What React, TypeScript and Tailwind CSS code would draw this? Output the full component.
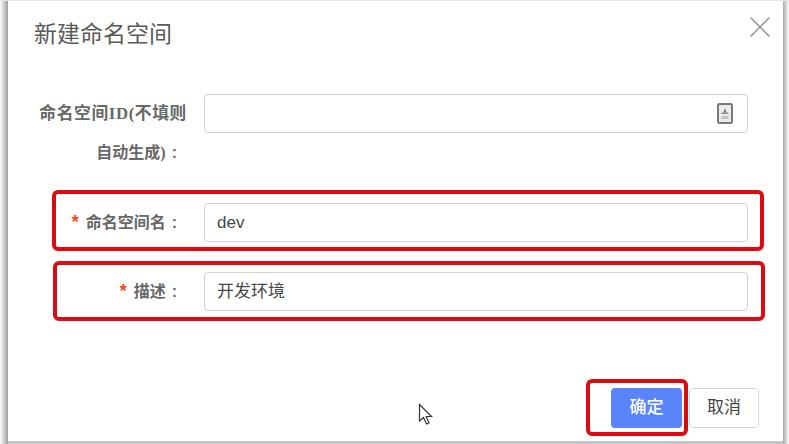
import { X } from 'lucide-react'

const cjk = '"Liberation Sans", "Noto Sans CJK SC", sans-serif'
const serifCjk = '"Liberation Serif", "Noto Sans CJK SC", serif'

function Colon() {
  return <span className="ml-[6px]">:</span>
}

function Label({ children }: { children: React.ReactNode }) {
  return (
    <label className="w-[169px] shrink-0 whitespace-nowrap pr-[10px] text-right text-[16px] leading-[39px] font-bold text-[#686868]">
      <span className="mr-[7px] text-[18px] text-[#f5471c]">*</span>
      {children}
      <Colon />
    </label>
  )
}

function Field({ value }: { value: string }) {
  return (
    <div className="flex h-[39px] w-[544px] items-center rounded border border-[#cccfd4] bg-white pl-3 text-[17px] text-[#484848]">
      {value}
    </div>
  )
}

// red marker boxes drawn over the screenshot
function Marker({ className }: { className: string }) {
  return <div className={`pointer-events-none absolute rounded-[6px] border-[4px] border-[#dd0a12] ${className}`} />
}

export default function App() {
  return (
    <div className="relative h-[444px] w-[789px] overflow-hidden bg-[#c4c4c4]" style={{ fontFamily: cjk }}>
      <div className="absolute left-0 top-0 h-full w-[8px] bg-gradient-to-r from-white to-[#a0a0a0]" />
      <div className="absolute right-0 top-0 h-full w-[6px] bg-gradient-to-r from-[#a8a8a8] to-white" />
      <div className="absolute left-0 top-0 h-[1px] w-full bg-[#e4e4e4]" />
      <div className="relative ml-[8px] mt-[1px] h-[440px] w-[775px] bg-white">
        <div className="flex items-start justify-between pl-[26px] pr-[5px] pt-[18px]">
          <h2 className="text-[23px] leading-[30px] font-normal text-[#5a5a5a]">新建命名空间</h2>
          <X className="-mt-[10px] text-[#8c8c8c]" size={36} strokeWidth={0.9} />
        </div>

        <form className="mt-[45px] flex flex-col pl-[10px]">
          <div className="flex items-start gap-[17px]">
            <label className="w-[169px] shrink-0 whitespace-nowrap text-right text-[16px] leading-[39px] font-bold text-[#686868]">
              <span className="text-[16.8px] tracking-[0.6px]">
                命名空间
                <span style={{ fontFamily: serifCjk }}>ID(</span>
                不填则
              </span>
              <br />
              <span className="pr-[10px]">
                自动生成
                <span style={{ fontFamily: serifCjk }}>)</span>
                <Colon />
              </span>
            </label>
            <div className="flex h-[39px] w-[544px] items-center justify-end rounded border border-[#cccfd4] bg-white pr-[14px]">
              <svg width="16" height="21" viewBox="0 0 16 21" fill="none">
                <rect x="1" y="1" width="14" height="19" rx="1.5" fill="#ececec" stroke="#7a7a7a" strokeWidth="2" />
                <path d="M8 5 L9.5 9.5 H6.5 Z" fill="#777" />
                <rect x="4.5" y="9.5" width="7" height="1.5" fill="#888" />
                <rect x="4.5" y="13" width="7" height="3" fill="#c4c4c4" />
              </svg>
            </div>
          </div>

          <div className="mt-[31px] flex items-center gap-[17px]">
            <Label>命名空间名</Label>
            <Field value="dev" />
          </div>

          <div className="mt-[30px] flex items-center gap-[17px]">
            <Label>描述</Label>
            <Field value="开发环境" />
          </div>
        </form>

        <div className="absolute bottom-[13px] right-[24px] flex gap-[7px]">
          <button className="h-[40px] w-[71px] rounded bg-[#5a85fa] text-[17px] font-medium text-white">确定</button>
          <button className="h-[40px] w-[70px] rounded border border-[#d5d7db] bg-white text-[17px] text-[#444]">取消</button>
        </div>
      </div>

      <Marker className="left-[52px] top-[190px] h-[61px] w-[712px]" />
      <Marker className="left-[53px] top-[261px] h-[60px] w-[712px]" />
      <Marker className="left-[586px] top-[379px] h-[57px] w-[102px]" />

      {/* mouse cursor */}
      <svg className="absolute left-[418px] top-[403px]" width="16" height="24" viewBox="0 0 16 24" fill="white" stroke="#333" strokeWidth="1.2">
        <path d="M1.5 1.5 V18 L5.5 14.5 L8.5 21 L11 20 L8.2 13.5 H13.5 Z" />
      </svg>
    </div>
  )
}
